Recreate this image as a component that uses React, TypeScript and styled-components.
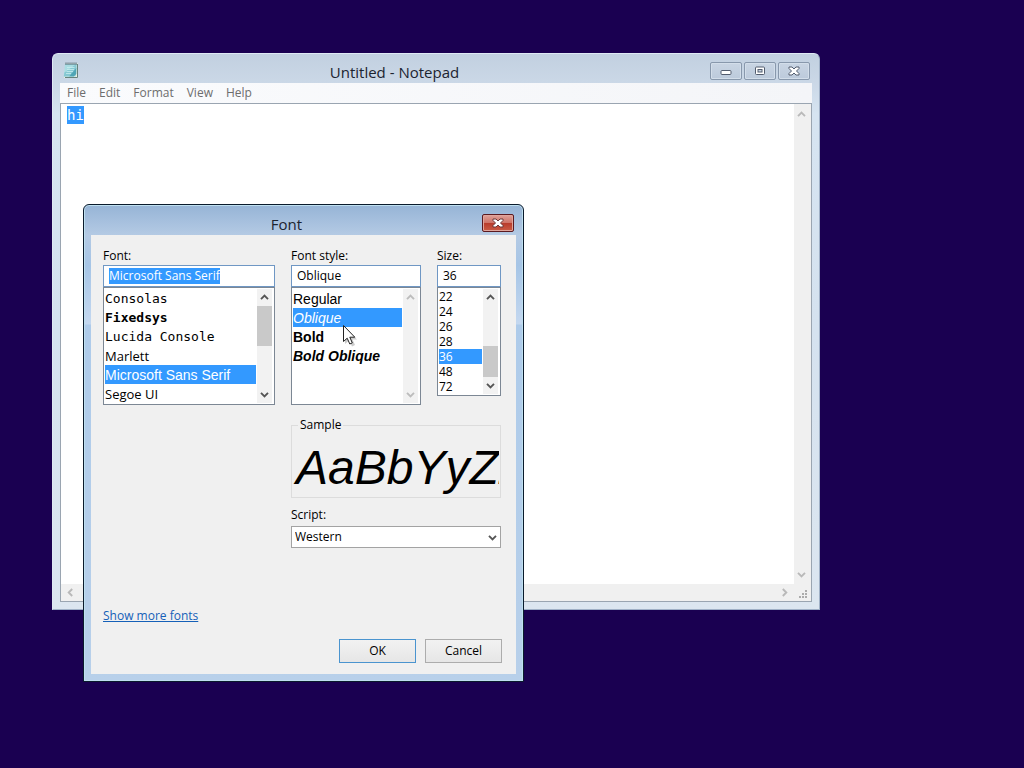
import React from 'react';
import styled, { createGlobalStyle, css } from 'styled-components';

const GlobalStyle = createGlobalStyle`
  *, *::before, *::after { box-sizing: border-box; }
  html, body, #root { height: 100%; }
  body { margin: 0; background: #1a0051; }
  body, button, input, textarea, select {
    font-family: "Open Sans", "Noto Sans", sans-serif;
    font-size: 12px;
    line-height: 16px;
    color: #000;
  }
`;

const Desktop = styled.main`
  position: relative;
  min-height: 100%;
  background: #1a0051;
  overflow: hidden;
`;

/* ---------- Notepad window ---------- */

const NotepadWindow = styled.section`
  position: absolute;
  left: 52px;
  top: 53px;
  width: 768px;
  height: 557px;
  display: flex;
  flex-direction: column;
  padding: 0 7px 7px;
  border: 1px solid #dfe9f4;
  border-right-color: #9fb0c6;
  border-bottom-color: #9fb0c6;
  border-radius: 6px 6px 0 0;
  background: linear-gradient(#c2d0e0 0, #cbd8e7 30px, #d6e4f1 60px, #d5e2ef 50%, #dce6f0 100%);
`;

const TitleBar = styled.header`
  display: grid;
  grid-template-columns: 19px 1fr 102px;
  align-items: end;
  height: 29px;
  flex: none;
`;

const Title = styled.h1`
  grid-column: 2;
  margin: 0 0 1px;
  font-size: 15px;
  font-weight: 400;
  line-height: 20px;
  text-align: center;
  color: #1c2430;
`;

const CaptionButtons = styled.div`
  grid-column: 3;
  display: flex;
  justify-content: flex-end;
  gap: 2px;
  padding: 0 2px 3px 0;
`;

const CaptionButton = styled.button<{ $danger?: boolean }>`
  display: flex;
  align-items: center;
  justify-content: center;
  width: 32px;
  height: 18px;
  padding: 0;
  border: 1px solid #8898ac;
  border-radius: 2px;
  background: linear-gradient(#c9d5e3, #bccadb);
  box-shadow: inset 0 0 0 1px #d3deea;
  ${p =>
    p.$danger &&
    css`
      border-color: #5b1a20;
      background: linear-gradient(#dfa199 0, #cf7468 48%, #b93c2c 52%, #cb5c45 100%);
      box-shadow: inset 0 0 0 1px #e0a59c;
    `}
`;

const AppIcon = styled.svg`
  margin: 0 0 4px 3px;
`;

const MenuBar = styled.nav`
  display: flex;
  flex: none;
  gap: 13px;
  height: 20px;
  padding: 0 7px;
  background: linear-gradient(90deg, #fafbfd, #f4f5f8);
`;

const MenuItem = styled.button`
  padding: 0;
  border: 0;
  background: none;
  color: #6d6d6d;
  line-height: 20px;
`;

const Editor = styled.div`
  display: grid;
  grid-template-columns: 1fr 17px;
  grid-template-rows: 1fr 17px;
  flex: 1;
  min-height: 0;
  border: 1px solid #9aa5b1;
  background: #f0f0f0;
`;

const Page = styled.div`
  padding: 2px 6px;
  background: #fff;
  font-family: "DejaVu Sans Mono", "Liberation Mono", monospace;
  font-size: 14px;
  line-height: 18px;
`;

const Selection = styled.span`
  display: inline-block;
  background: #3399ff;
  color: #fff;
`;

const EditorBar = styled.div<{ $horizontal?: boolean }>`
  display: flex;
  flex-direction: ${p => (p.$horizontal ? 'row' : 'column')};
  justify-content: space-between;
  align-items: center;
  padding: ${p => (p.$horizontal ? '0 5px' : '6px 3px 5px 0')};
  background: #f0f0f0;
`;

const Grip = styled.svg`
  align-self: end;
  justify-self: end;
  margin: 0 3px 2px 0;
`;

/* ---------- Font dialog ---------- */

const DialogWindow = styled.section`
  position: absolute;
  left: 83px;
  top: 204px;
  width: 441px;
  height: 478px;
  display: flex;
  flex-direction: column;
  padding: 0 7px 7px;
  border: 1px solid #0a1a2c;
  border-radius: 6px 6px 0 0;
  box-shadow: inset 0 0 0 1px #bfe0f0;
  background: linear-gradient(#96b4d6 0, #b4cae4 30px, #a6c5e6 60px, #c4d8f0 119px, #aecbea 120px, #b8d0ea 100%);
`;

const DialogTitleBar = styled(TitleBar)`
  grid-template-columns: 0 1fr 34px;
  height: 30px;
`;

const DialogBody = styled.form`
  display: flex;
  flex: 1;
  flex-direction: column;
  padding: 13px 15px 11px 12px;
  background: #f0f0f0;
`;

const Columns = styled.div`
  display: grid;
  grid-template-columns: 172px 130px 1fr;
  gap: 16px;
`;

const Field = styled.div`
  display: flex;
  flex-direction: column;
  min-width: 0;
`;

const Label = styled.label`
  height: 17px;
`;

const TextBox = styled.div`
  display: flex;
  align-items: center;
  height: 22px;
  padding: 0 5px;
  border: 1px solid #6f97c4;
  background: #fff;
`;

const TextInput = styled.input`
  width: 100%;
  height: 16px;
  padding: 0;
  border: 0;
  outline: 0;
  background: transparent;
  &::selection { background: #3399ff; color: #fff; }
`;

const ListBox = styled.div<{ $height: number }>`
  display: flex;
  height: ${p => p.$height}px;
  padding: 1px;
  border: 1px solid #7c8794;
  background: #fff;
`;

const Options = styled.ul`
  flex: 1;
  min-width: 0;
  margin: 0;
  padding: 0;
  list-style: none;
  overflow: hidden;
`;

const faces = {
  ui: css`font-size: 12px;`,
  large: css`padding-top: 1px; font-size: 13px;`,
  mono: css`font-family: "DejaVu Sans Mono", monospace; font-size: 13px;`,
  sans: css`padding-top: 1px; font-family: "Liberation Sans", Arial, sans-serif; font-size: 14px;`,
};

const Option = styled.li<{ $face: keyof typeof faces; $row: number; $bold?: boolean; $slanted?: boolean }>`
  height: ${p => p.$row}px;
  line-height: ${p => p.$row}px;
  white-space: nowrap;
  ${p => faces[p.$face]}
  font-weight: ${p => (p.$bold ? 700 : 400)};
  font-style: ${p => (p.$slanted ? 'italic' : 'normal')};
  &[aria-selected='true'] { background: #3399ff; color: #fff; }
`;

const ScrollTrack = styled.div`
  display: flex;
  flex-direction: column;
  flex: none;
  align-items: center;
  width: 15px;
  margin: 0 1px;
  background: #f2f2f2;
`;

const ScrollArrow = styled.span`
  display: flex;
  flex: none;
  align-items: center;
  justify-content: center;
  height: 17px;
`;

const Spacer = styled.span`
  flex: 1;
`;

const Thumb = styled.span<{ $height: number }>`
  flex: none;
  width: 15px;
  height: ${p => p.$height}px;
  background: #c9c9c9;
`;

const Details = styled.div`
  display: flex;
  flex-direction: column;
  width: 210px;
  margin: 12px 0 0 188px;
`;

const SampleBox = styled.fieldset`
  height: 81px;
  min-width: 0;
  margin: 0 0 9px;
  padding: 0 1px;
  border: 1px solid #dcdcdc;
`;

const Legend = styled.legend`
  margin-left: 5px;
  padding: 0 2px;
`;

const SampleText = styled.div`
  overflow: hidden;
  padding: 5px 0 0 3px;
  font-family: "Liberation Sans", Arial, sans-serif;
  font-size: 48px;
  font-style: italic;
  line-height: 60px;
  white-space: nowrap;
  color: #000;
`;

const SelectWrap = styled.div`
  display: grid;
  align-items: center;
  margin-top: 3px;
  & > * { grid-area: 1 / 1; }
  & > svg { justify-self: end; margin-right: 4px; pointer-events: none; }
`;

const Select = styled.select`
  height: 22px;
  padding: 0 3px;
  border: 1px solid #a3a3a3;
  border-radius: 0;
  background: #fff;
  appearance: none;
`;

const MoreFonts = styled.a`
  align-self: flex-start;
  margin-top: auto;
  color: #1560b8;
  text-decoration: underline;
`;

const Actions = styled.div`
  display: flex;
  justify-content: flex-end;
  gap: 9px;
  margin: 15px -1px 0 0;
`;

const PushButton = styled.button<{ $primary?: boolean }>`
  width: 77px;
  height: 24px;
  padding: 0;
  border: 1px solid ${p => (p.$primary ? '#4a94cf' : '#acacac')};
  background: linear-gradient(#f2f2f2, #e6e6e6);
`;

const Pointer = styled.svg`
  position: absolute;
  left: 342px;
  top: 324px;
`;

/* ---------- Drawings ---------- */

const turns = { up: 0, right: 90, down: 180, left: 270 };

function Chevron({ to, color = '#555' }: { to: keyof typeof turns; color?: string }) {
  return (
    <svg width="9" height="9" viewBox="0 0 9 9" aria-hidden="true">
      <path d="M1 6.2 4.5 2.7 8 6.2" fill="none" stroke={color} strokeWidth="1.9" transform={`rotate(${turns[to]} 4.5 4.5)`} />
    </svg>
  );
}

function CloseGlyph({ outline }: { outline: string }) {
  return (
    <svg width="12" height="10" viewBox="0 0 12 10" aria-hidden="true">
      <path d="M1 1h3l2 2 2-2h3v1.500L8.500 5 11 7.500V9H8L6 7 4 9H1V7.500L3.500 5 1 2.500z" fill="#fff" stroke={outline} strokeWidth="1" />
    </svg>
  );
}

function NotepadIcon() {
  return (
    <AppIcon width="16" height="18" viewBox="0 0 16 18" aria-hidden="true">
      <path d="M2.500 2.500h12.500v14.500H1z" fill="#eef0e2" />
      <path d="M2 3h11.500l-.5 12.500H.8z" fill="#a9dde3" />
      <path d="M13.500 3v5L6 15.500H.8l.6-4z" fill="#86c8d2" />
      <path d="M13.300 7v6l-2.500 2.500H6z" fill="#4fa5b5" />
      <path d="M4 6.500h7.500M4 8.500h7M3.500 10.500h6.500M3 12.500h5" stroke="#c9ecef" strokeWidth=".8" />
      <path d="M14.500 3v13.500H2" fill="none" stroke="#66827c" />
      <path d="M3 1.500v2.500M5 1.500v2.500M7 1.500v2.500M9 1.500v2.500M11 1.500v2.500M13 1.500v2.500" stroke="#4d6570" />
    </AppIcon>
  );
}

/* ---------- Pieces ---------- */

interface Choice {
  text: string;
  face: keyof typeof faces;
  bold?: boolean;
  slanted?: boolean;
}

interface ChooserProps {
  label: string;
  value: string;
  choices: Choice[];
  selected: string;
  row: number;
  height: number;
  scroll: 'top' | 'near-end' | 'none';
  highlighted?: boolean;
}

function Chooser({ label, value, choices, selected, row, height, scroll, highlighted }: ChooserProps) {
  const id = React.useId();
  const input = React.useRef<HTMLInputElement>(null);
  React.useEffect(() => {
    if (highlighted) {
      input.current?.focus();
      input.current?.select();
    }
  }, [highlighted]);
  const arrow = scroll === 'none' ? '#bdbdbd' : '#555';
  return (
    <Field>
      <Label htmlFor={id}>{label}</Label>
      <TextBox>
        <TextInput ref={input} id={id} defaultValue={value} spellCheck={false} />
      </TextBox>
      <ListBox $height={height}>
        <Options role="listbox" aria-label={label}>
          {choices.map(c => (
            <Option
              key={c.text}
              role="option"
              aria-selected={c.text === selected}
              $row={row}
              $face={c.face}
              $bold={c.bold}
              $slanted={c.slanted}
            >
              {c.text}
            </Option>
          ))}
        </Options>
        <ScrollTrack>
          <ScrollArrow><Chevron to="up" color={arrow} /></ScrollArrow>
          {scroll === 'top' && <Thumb $height={40} />}
          <Spacer />
          {scroll === 'near-end' && <Thumb $height={31} />}
          <ScrollArrow><Chevron to="down" color={arrow} /></ScrollArrow>
        </ScrollTrack>
      </ListBox>
    </Field>
  );
}

const fonts: Choice[] = [
  { text: 'Consolas', face: 'mono' },
  { text: 'Fixedsys', face: 'mono', bold: true },
  { text: 'Lucida Console', face: 'mono' },
  { text: 'Marlett', face: 'large' },
  { text: 'Microsoft Sans Serif', face: 'sans' },
  { text: 'Segoe UI', face: 'large' },
];

const styles: Choice[] = [
  { text: 'Regular', face: 'sans' },
  { text: 'Oblique', face: 'sans', slanted: true },
  { text: 'Bold', face: 'sans', bold: true },
  { text: 'Bold Oblique', face: 'sans', bold: true, slanted: true },
];

const sizes: Choice[] = ['22', '24', '26', '28', '36', '48', '72'].map(text => ({ text, face: 'ui' }));

function Notepad() {
  return (
    <NotepadWindow aria-label="Notepad">
      <TitleBar>
        <NotepadIcon />
        <Title>Untitled - Notepad</Title>
        <CaptionButtons>
          <CaptionButton aria-label="Minimize">
            <svg width="12" height="10" viewBox="0 0 12 10" aria-hidden="true">
              <rect x="1" y="4.500" width="10" height="4" rx="1" fill="#fff" stroke="#525c6e" />
            </svg>
          </CaptionButton>
          <CaptionButton aria-label="Maximize">
            <svg width="12" height="10" viewBox="0 0 12 10" aria-hidden="true">
              <rect x="1.500" y="1" width="9" height="7.500" rx="1" fill="#fff" stroke="#525c6e" />
              <rect x="4" y="3.500" width="4" height="2.500" fill="#c5d1df" stroke="#525c6e" />
            </svg>
          </CaptionButton>
          <CaptionButton aria-label="Close"><CloseGlyph outline="#525c6e" /></CaptionButton>
        </CaptionButtons>
      </TitleBar>
      <MenuBar>
        {['File', 'Edit', 'Format', 'View', 'Help'].map(name => (
          <MenuItem key={name}>{name}</MenuItem>
        ))}
      </MenuBar>
      <Editor>
        <Page><Selection>hi</Selection></Page>
        <EditorBar>
          <Chevron to="up" color="#b9b9b9" />
          <Chevron to="down" color="#b9b9b9" />
        </EditorBar>
        <EditorBar $horizontal>
          <Chevron to="left" color="#b9b9b9" />
          <Chevron to="right" color="#b9b9b9" />
        </EditorBar>
        <Grip width="9" height="9" viewBox="0 0 9 9" fill="#ababab" aria-hidden="true">
          <path d="M6 0h2v2H6zM3 3h2v2H3zM6 3h2v2H6zM0 6h2v2H0zM3 6h2v2H3zM6 6h2v2H6z" />
        </Grip>
      </Editor>
    </NotepadWindow>
  );
}

function FontDialog() {
  return (
    <DialogWindow role="dialog" aria-label="Font">
      <DialogTitleBar>
        <Title>Font</Title>
        <CaptionButtons>
          <CaptionButton $danger aria-label="Close"><CloseGlyph outline="#6d3a3a" /></CaptionButton>
        </CaptionButtons>
      </DialogTitleBar>
      <DialogBody onSubmit={e => e.preventDefault()}>
        <Columns>
          <Chooser label="Font:" value="Microsoft Sans Serif" choices={fonts} selected="Microsoft Sans Serif" row={19} height={118} scroll="top" highlighted />
          <Chooser label="Font style:" value="Oblique" choices={styles} selected="Oblique" row={19} height={118} scroll="none" />
          <Chooser label="Size:" value="36" choices={sizes} selected="36" row={15} height={109} scroll="near-end" />
        </Columns>
        <Details>
          <SampleBox>
            <Legend>Sample</Legend>
            <SampleText>AaBbYyZz</SampleText>
          </SampleBox>
          <label htmlFor="script">Script:</label>
          <SelectWrap>
            <Select id="script" defaultValue="Western">
              <option>Western</option>
            </Select>
            <Chevron to="down" />
          </SelectWrap>
        </Details>
        <MoreFonts href="#fonts">Show more fonts</MoreFonts>
        <Actions>
          <PushButton type="submit" $primary>OK</PushButton>
          <PushButton type="button">Cancel</PushButton>
        </Actions>
      </DialogBody>
    </DialogWindow>
  );
}

export default function App() {
  return (
    <>
      <GlobalStyle />
      <Desktop>
        <Notepad />
        <FontDialog />
        <Pointer width="16" height="23" viewBox="0 0 16 23" aria-hidden="true">
          <path d="M3 3v17l4-3.500 3 6 3-1.500-2.500-5.500H15z" fill="#000" opacity=".2" />
          <path d="M1.500 1.500v16l3.700-3.300 2.600 5.800 2.500-1.100-2.500-5.700h5z" fill="#fff" stroke="#222" />
        </Pointer>
      </Desktop>
    </>
  );
}
